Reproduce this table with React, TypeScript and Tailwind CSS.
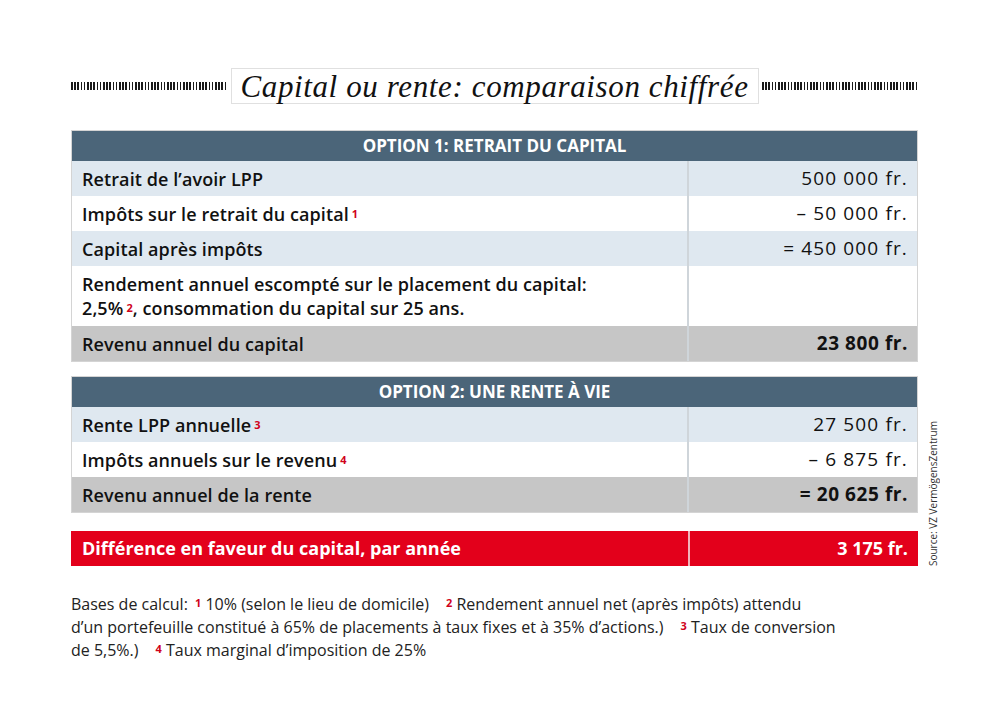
import React from "react";

type Row = {
  label: React.ReactNode;
  value: string;
  tone: "blue" | "white" | "gray";
  bold?: boolean;
  tall?: boolean;
};

const Sup = ({ n }: { n: number }) => (
  <sup className="ml-[3px] text-[11px] font-bold text-[#d0021b] relative -top-[3px] leading-none">{n}</sup>
);

const OPTION_1: Row[] = [
  { label: "Retrait de l’avoir LPP", value: "500 000 fr.", tone: "blue" },
  { label: <>Impôts sur le retrait du capital<Sup n={1} /></>, value: "– 50 000 fr.", tone: "white" },
  { label: "Capital après impôts", value: "= 450 000 fr.", tone: "blue" },
  {
    label: (
      <>
        Rendement annuel escompté sur le placement du capital:
        <br />
        2,5%<Sup n={2} />, consommation du capital sur 25 ans.
      </>
    ),
    value: "",
    tone: "white",
    tall: true,
  },
  { label: "Revenu annuel du capital", value: "23 800 fr.", tone: "gray", bold: true },
];

const OPTION_2: Row[] = [
  { label: <>Rente LPP annuelle<Sup n={3} /></>, value: "27 500 fr.", tone: "blue" },
  { label: <>Impôts annuels sur le revenu<Sup n={4} /></>, value: "– 6 875 fr.", tone: "white" },
  { label: "Revenu annuel de la rente", value: "= 20 625 fr.", tone: "gray", bold: true },
];

const toneBg = {
  blue: "bg-[#dfe8f0]",
  white: "bg-white",
  gray: "bg-[#c6c6c6]",
};

function Table({ title, rows }: { title: string; rows: Row[] }) {
  return (
    <div className="border border-[#d4d4d4]">
      <div className="h-[30px] bg-[#4b6579] flex items-center justify-center text-white font-bold text-[17px]">
        {title}
      </div>
      {rows.map((r, i) => (
        <div key={i} className={`flex ${toneBg[r.tone]} ${r.tall ? "h-[60px]" : "h-[35px]"}`}>
          <div className="flex-1 flex items-center pl-[10px] text-[18px] leading-[24px] font-semibold text-[#111] tracking-[0.005em]">
            <span>{r.label}</span>
          </div>
          <div
            className={`w-[230px] border-l-2 border-[#cfd5da] flex items-center justify-end pr-[9px] text-[19px] text-[#111] ${
              r.bold ? "font-bold tracking-[0.03em]" : "font-normal tracking-[0.06em]"
            }`}
          >
            {r.value}
          </div>
        </div>
      ))}
    </div>
  );
}

const hatch =
  "h-[8px] flex-1 bg-[repeating-linear-gradient(90deg,#1a1a1a_0_1.6px,transparent_1.6px_3.2px)]";

export default function App() {
  return (
    <div className="w-[1000px] h-[710px] bg-white font-['Open_Sans','Noto_Sans',sans-serif] text-[#111] overflow-hidden">
      <div className="pl-[71px] pt-[68px]">
        <div className="w-[847px] flex items-center gap-[3px]">
          <div className={hatch} />
          <div className="border border-[#e0e0e0] px-[9px] h-[36px] flex items-center">
            <h1 className="font-['Liberation_Serif','DejaVu_Serif',serif] italic text-[31px] tracking-[0.02em] leading-none text-[#111] whitespace-nowrap">
              Capital ou rente: comparaison chiffrée
            </h1>
          </div>
          <div className={hatch} />
        </div>

        <div className="flex items-end">
          <div className="w-[847px] flex flex-col">
            <div className="mt-[26px]">
              <Table title="OPTION 1: RETRAIT DU CAPITAL" rows={OPTION_1} />
            </div>

            <div className="mt-[14px]">
              <Table title="OPTION 2: UNE RENTE À VIE" rows={OPTION_2} />
            </div>

            <div className="mt-[18px] flex h-[35px] bg-[#e3001b] text-white font-bold text-[18px]">
              <div className="flex-1 flex items-center pl-[11px]">Différence en faveur du capital, par année</div>
              <div className="w-[230px] border-l-2 border-[#f2b3ba] flex items-center justify-end pr-[10px]">
                3 175 fr.
              </div>
            </div>
          </div>
          <div className="pl-[8px]">
            <span className="block [writing-mode:vertical-rl] rotate-180 text-[10px] text-[#333] whitespace-nowrap">
              Source: VZ VermögensZentrum
            </span>
          </div>
        </div>

        <p className="mt-[27px] text-[16px] leading-[23px] text-[#222]">
          Bases de calcul: <Sup n={1} /> 10% (selon le lieu de domicile)
          <span className="inline-block w-[14px]" />
          <Sup n={2} /> Rendement annuel net (après impôts) attendu
          <br />
          d’un portefeuille constitué à 65% de placements à taux fixes et à 35% d’actions.)
          <span className="inline-block w-[14px]" />
          <Sup n={3} /> Taux de conversion
          <br />
          de 5,5%.)
          <span className="inline-block w-[14px]" />
          <Sup n={4} /> Taux marginal d’imposition de 25%
        </p>
      </div>
    </div>
  );
}
